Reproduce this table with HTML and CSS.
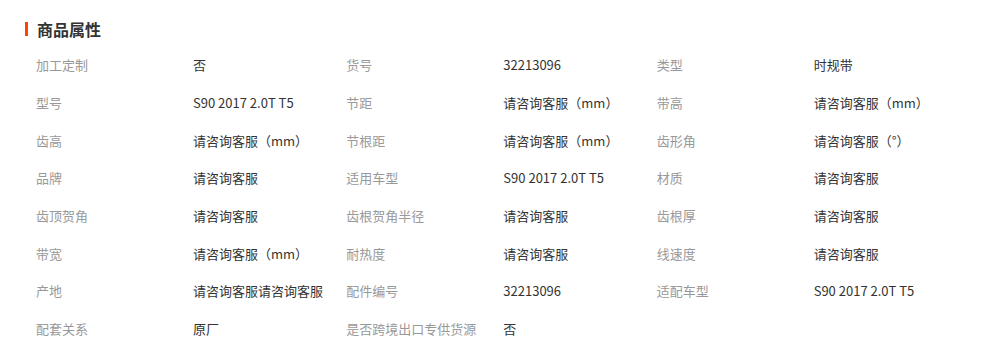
FILE: index.html
```html
<!DOCTYPE html>
<html lang="zh-CN">
<head>
<meta charset="utf-8">
<title>商品属性</title>
<link rel="stylesheet" href="styles.css">
</head>
<body>
<section class="attrs">
  <h2 class="attrs-title">商品属性</h2>
  <div class="attrs-grid">
    <div class="item"><span class="label">加工定制</span><span class="value">否</span></div>
    <div class="item"><span class="label">货号</span><span class="value">32213096</span></div>
    <div class="item"><span class="label">类型</span><span class="value">时规带</span></div>

    <div class="item"><span class="label">型号</span><span class="value">S90 2017 2.0T T5</span></div>
    <div class="item"><span class="label">节距</span><span class="value">请咨询客服（mm）</span></div>
    <div class="item"><span class="label">带高</span><span class="value">请咨询客服（mm）</span></div>

    <div class="item"><span class="label">齿高</span><span class="value">请咨询客服（mm）</span></div>
    <div class="item"><span class="label">节根距</span><span class="value">请咨询客服（mm）</span></div>
    <div class="item"><span class="label">齿形角</span><span class="value">请咨询客服（°）</span></div>

    <div class="item"><span class="label">品牌</span><span class="value">请咨询客服</span></div>
    <div class="item"><span class="label">适用车型</span><span class="value">S90 2017 2.0T T5</span></div>
    <div class="item"><span class="label">材质</span><span class="value">请咨询客服</span></div>

    <div class="item"><span class="label">齿顶贺角</span><span class="value">请咨询客服</span></div>
    <div class="item"><span class="label">齿根贺角半径</span><span class="value">请咨询客服</span></div>
    <div class="item"><span class="label">齿根厚</span><span class="value">请咨询客服</span></div>

    <div class="item"><span class="label">带宽</span><span class="value">请咨询客服（mm）</span></div>
    <div class="item"><span class="label">耐热度</span><span class="value">请咨询客服</span></div>
    <div class="item"><span class="label">线速度</span><span class="value">请咨询客服</span></div>

    <div class="item"><span class="label">产地</span><span class="value">请咨询客服请咨询客服</span></div>
    <div class="item"><span class="label">配件编号</span><span class="value">32213096</span></div>
    <div class="item"><span class="label">适配车型</span><span class="value">S90 2017 2.0T T5</span></div>

    <div class="item"><span class="label">配套关系</span><span class="value">原厂</span></div>
    <div class="item"><span class="label">是否跨境出口专供货源</span><span class="value">否</span></div>
  </div>
</section>
</body>
</html>
```

FILE: styles.css
```css
html, body {
  margin: 0;
  padding: 0;
  background: #fff;
}

body {
  font-family: "Noto Sans CJK SC", "Noto Sans", sans-serif;
  color: #333;
}

.attrs {
  padding: 22px 0 0 25px;
}

.attrs-title {
  margin: 0;
  border-left: 3px solid #ff4400;
  padding-left: 9px;
  font-size: 16px;
  line-height: 14px;
  font-weight: bold;
  color: #333;
}

.attrs-title::before {
  content: none;
}

.attrs-grid {
  margin-top: 10px;
  padding-left: 11px;
  width: 931px;
  display: grid;
  grid-template-columns: repeat(3, 1fr);
  grid-auto-rows: 37.7px;
}

.item {
  display: flex;
  align-items: center;
  font-size: 13px;
  white-space: nowrap;
}

.label {
  width: 157px;
  flex: none;
  color: #999;
}

.value {
  color: #333;
}
```
